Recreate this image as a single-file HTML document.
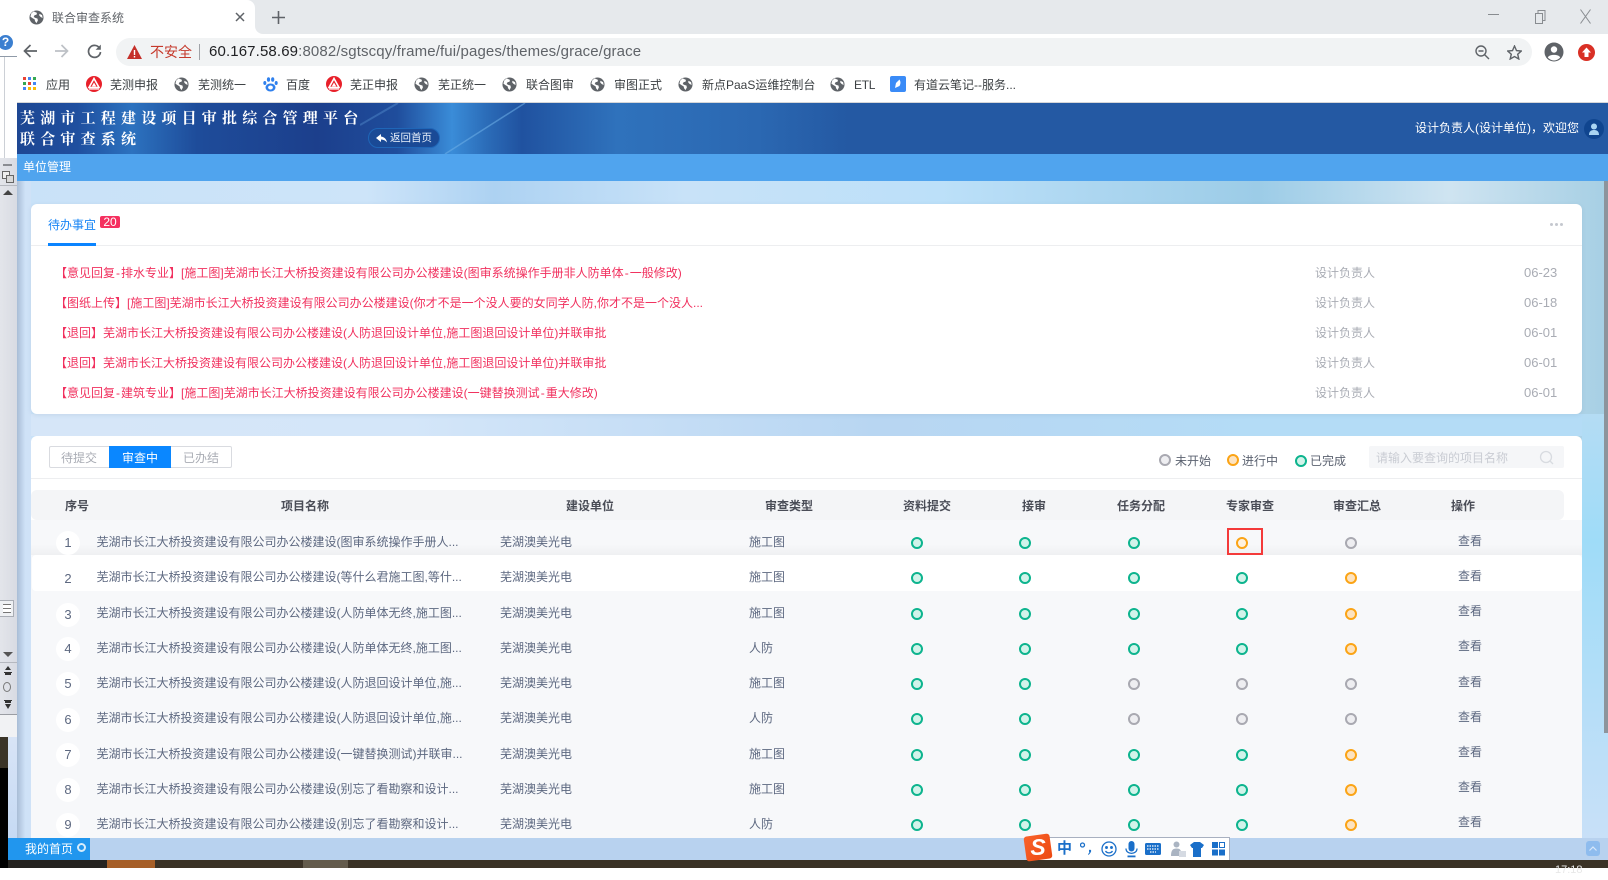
<!DOCTYPE html>
<html lang="zh"><head><meta charset="utf-8"><title>联合审查系统</title>
<style>
*{box-sizing:border-box}
html,body{margin:0;padding:0}
body{width:1608px;height:868px;position:relative;overflow:hidden;background:#fff;font-family:"Liberation Sans","Noto Sans CJK SC",sans-serif;font-size:12px}
.a{position:absolute}
.t{position:absolute;line-height:20px;height:20px;white-space:nowrap;font-size:12px}
.bm{color:#3c4043}
.r{color:#f1305e;left:55px}
.r i{font-style:normal;padding:0 1px}
.n{color:#a9acb4}
.d{color:#a9acb4;font-size:13px}
.h{color:#4a4d57;font-weight:bold;transform:translateX(-50%)}
.c{color:#5d6880}
.v{color:#5d6880;left:1458px}
.num{position:absolute;left:56px;width:24px;height:24px;border-radius:50%;background:#fff;color:#5d6880;font-size:13px;text-align:center;line-height:24px}
.s{position:absolute;width:12px;height:12px;border-radius:50%;border:2px solid;margin:-6px 0 0 -6px}
.g{border-color:#0db48e;background:#d2f3ea}
.o{border-color:#fba416;background:#fde3c0}
.y{border-color:#a9a9b1;background:#eeeef1}
</style></head><body>
<svg width="0" height="0" style="position:absolute"><defs>
<symbol id="gl" viewBox="0 0 16 16"><circle cx="8" cy="8" r="7.500" fill="#5f6368"/><path d="M5 1.500 8.500 3 8 5 6 5.500 5 7.500 7 8.500 9 9 9.500 11 8 14 6.500 12 6 10 3.500 8.500 1.500 7 2.500 3.500Z M11 4 14 5.500 14.500 8.500 12.500 7.500 11 6Z" fill="#fff"/></symbol>
<symbol id="rd" viewBox="0 0 16 16"><circle cx="8" cy="8" r="8" fill="#e8202a"/><path d="M8 2.500 13 11.500H3Z" fill="none" stroke="#fff" stroke-width="1.600"/><path d="M8 6.500 10.300 10.500H5.700Z" fill="#fff"/><path d="M3 13H13" stroke="#fff" stroke-width="1.200"/></symbol>
</defs></svg>

<!-- left app panel -->
<div class="a" style="left:0;top:0;width:17px;height:158px;background:#fff"></div>
<div class="a" style="left:0;top:56px;width:17px;height:1px;background:#8f9aa8"></div>
<div class="a" style="left:4px;top:57px;width:1px;height:101px;background:#ccd0d6"></div>
<div class="a" style="left:-2px;top:35px;width:15px;height:15px;border-radius:50%;background:#3b7fd0;color:#fff;font:bold 12px/15px 'Liberation Sans',sans-serif;text-align:center">?</div>
<div class="a" style="left:0;top:158px;width:17px;height:579px;background:linear-gradient(90deg,#e3e5ea,#d8dbe3)"></div>
<div class="a" style="left:3px;top:164px;width:9px;height:2px;background:#8a8d92"></div>
<svg class="a" style="left:1px;top:170px" width="14" height="14" fill="#eee" stroke="#666"><path d="M1.500 1.500H8.500V8.500H1.500Z"/><path d="M5.500 5.500H12.500V12.500H5.500Z" fill="#d8d8d8"/></svg>
<div class="a" style="left:0;top:185px;width:17px;height:1px;background:#b5b8bf"></div>
<div class="a" style="left:3px;top:190px;width:0;height:0;border:5px solid transparent;border-bottom:5px solid #444;border-top:0"></div>
<div class="a" style="left:0;top:600px;width:14px;height:17px;background:#eef0f3;border:1px solid #a9adb5;border-left:0"></div>
<div class="a" style="left:3px;top:604px;width:8px;height:9px;border-top:1px solid #777;border-bottom:1px solid #777;background:linear-gradient(#fff 45%,#777 45%,#777 55%,#fff 55%)"></div>
<div class="a" style="left:3px;top:652px;width:0;height:0;border:5px solid transparent;border-top:5px solid #555;border-bottom:0"></div>
<div class="a" style="left:0;top:662px;width:17px;height:1px;background:#b5b8bf"></div>
<svg class="a" style="left:4px;top:666px" width="8" height="9" fill="#333"><path d="M4 0 7 4H1ZM0 6H8V7H0Z"/><path d="M1 7H7V9H1Z"/></svg>
<div class="a" style="left:3px;top:682px;width:8px;height:10px;border:1px solid #777;border-radius:50%"></div>
<svg class="a" style="left:4px;top:700px" width="8" height="10" fill="#333"><path d="M0 0H8V1H0ZM1 1H7V3H1ZM4 9 7 4H1Z"/></svg>
<div class="a" style="left:0;top:714px;width:17px;height:1px;background:#9a9da3"></div>
<div class="a" style="left:0;top:715px;width:17px;height:22px;background:#f1f2f4"></div>

<!-- desktop strip -->
<div class="a" style="left:0;top:737px;width:8px;height:131px;background:#000"></div>
<div class="a" style="left:0;top:737px;width:8px;height:31px;background:#3a3428"></div>

<!-- main content background -->
<div class="a" style="left:8px;top:737px;width:23px;height:101px;background:linear-gradient(#d8e4f6,#c6daf4)"></div>
<div class="a" style="left:17px;top:181px;width:1591px;height:657px;background:linear-gradient(90deg,#c9e2f8 0,#cde4f9 22%,#add2f2 30%,#c8e2f8 42%,#bce0f9 58%,#9ccce7 78%,#cfe4f1 90%,#a6cfe4 100%)"></div>
<div class="a" style="left:1582px;top:414px;width:26px;height:424px;background:linear-gradient(#b4dcf4,#9fdcf8 30%,#c8e0f8 100%)"></div>
<div class="a" style="left:17px;top:414px;width:1565px;height:22px;background:linear-gradient(90deg,#d6e6f8 0,#d4e6f9 25%,#b8d6f2 55%,#b4dcf6 80%,#b4dcf6 100%)"></div>
<div class="a" style="left:17px;top:181px;width:14px;height:657px;background:linear-gradient(90deg,#a9bdd6,#cfe2f7 60%)"></div>
<div class="a" style="left:1604px;top:181px;width:4px;height:552px;background:#8d949c"></div>

<!-- chrome -->
<div class="a" style="left:17px;top:0;width:1591px;height:34px;background:#e6e9ec"></div>
<div class="a" style="left:17px;top:34px;width:1591px;height:68px;background:#fff"></div>
<div class="a" style="left:17px;top:102px;width:1591px;height:1px;background:#d5d6d8"></div>
<div class="a" style="left:17px;top:0;width:238px;height:34px;background:#fff;border-top-right-radius:8px"></div>
<div class="a" style="left:255px;top:26px;width:8px;height:8px;background:#fff"></div>
<div class="a" style="left:255px;top:26px;width:8px;height:8px;background:#e6e9ec;border-bottom-left-radius:8px"></div>
<svg class="a" style="left:29px;top:10px" width="15" height="15"><use href="#gl"/></svg>
<div class="t" style="left:52px;top:8px;color:#5f6368">联合审查系统</div>
<svg class="a" style="left:235px;top:12px" width="10" height="10"><path d="M1 1 9 9M9 1 1 9" stroke="#5f6368" stroke-width="1.500"/></svg>
<svg class="a" style="left:272px;top:11px" width="13" height="13"><path d="M6.500 0V13M0 6.500H13" stroke="#5f6368" stroke-width="1.600"/></svg>
<svg class="a" style="left:1488px;top:8px" width="104" height="16" fill="none" stroke="#888c90"><path d="M0 6.500H11"/><path d="M47.500 5.500H54.500V15.500H47.500ZM50 5.500V2.500H57V12.500H54.500"/><path d="M92.500 1.500 102.500 15.500M102.500 1.500 92.500 15.500"/></svg>

<svg class="a" style="left:23px;top:44px" width="14" height="14" fill="none" stroke="#5f6368" stroke-width="1.700"><path d="M14 7H1.500M7.500 1 1.500 7 7.500 13"/></svg>
<svg class="a" style="left:55px;top:44px" width="14" height="14" fill="none" stroke="#bdc1c6" stroke-width="1.700"><path d="M0 7H12.500M6.500 1 12.500 7 6.500 13"/></svg>
<svg class="a" style="left:87px;top:44px" width="15" height="15" fill="none" stroke="#5f6368" stroke-width="1.700"><path d="M12.800 4.500A6 6 0 1 0 13.500 8"/><path d="M13.800 0.600V5.800H8.600Z" fill="#5f6368" stroke="none"/></svg>

<div class="a" style="left:116px;top:38px;width:1416px;height:28px;background:#f1f3f4;border-radius:14px"></div>
<svg class="a" style="left:127px;top:45px" width="15" height="14"><path d="M7.500 0 15 14H0Z" fill="#c5302a"/><path d="M6.800 5H8.200V10H6.800ZM6.800 11H8.200V12.500H6.800Z" fill="#fff"/></svg>
<div class="t" style="left:150px;top:42px;color:#c5392b;font-size:14px">不安全</div>
<div class="a" style="left:199px;top:44px;width:1px;height:16px;background:#a0a3a8"></div>
<div class="t" style="left:209px;top:42px;font-size:15px;letter-spacing:.13px;color:#5f6368"><span style="color:#202124">60.167.58.69</span>:8082/sgtscqy/frame/fui/pages/themes/grace/grace</div>
<svg class="a" style="left:1475px;top:45px" width="15" height="15" fill="none" stroke="#5f6368" stroke-width="1.400"><circle cx="6" cy="6" r="5"/><path d="M9.700 9.700 14 14M3.500 6H8.500"/></svg>
<svg class="a" style="left:1507px;top:45px" width="15" height="15" fill="none" stroke="#5f6368" stroke-width="1.400"><path d="M7.500 1 9.500 5.600 14.300 6 10.700 9.200 11.800 14 7.500 11.500 3.200 14 4.300 9.200 0.700 6 5.500 5.600Z"/></svg>
<svg class="a" style="left:1544px;top:42px" width="20" height="20"><circle cx="10" cy="10" r="9.500" fill="#5f6368"/><circle cx="10" cy="7.500" r="3.200" fill="#fff"/><path d="M3.800 15.500C5 12 15 12 16.200 15.500A8 8 0 0 1 3.800 15.500Z" fill="#fff"/></svg>
<svg class="a" style="left:1578px;top:44px" width="17" height="17"><circle cx="8.500" cy="8.500" r="8.500" fill="#d93025"/><path d="M8.500 3.500 13 8.500H10.500V13H6.500V8.500H4Z" fill="#fff"/></svg>

<!-- bookmarks -->
<svg class="a" style="left:23px;top:77px" width="13" height="13"><g fill="#ea4335"><rect x="0" y="0" width="3" height="3"/><rect x="5" y="0" width="3" height="3" fill="#4285f4"/><rect x="10" y="0" width="3" height="3" fill="#34a853"/><rect x="0" y="5" width="3" height="3" fill="#34a853"/><rect x="5" y="5" width="3" height="3"/><rect x="10" y="5" width="3" height="3" fill="#4285f4"/><rect x="0" y="10" width="3" height="3" fill="#4285f4"/><rect x="5" y="10" width="3" height="3" fill="#fbbc05"/><rect x="10" y="10" width="3" height="3" fill="#fbbc05"/></g></svg>
<div class="t bm" style="left:46px;top:75px">应用</div>
<svg class="a" style="left:86px;top:76px" width="16" height="16"><use href="#rd"/></svg>
<div class="t bm" style="left:110px;top:75px">芜测申报</div>
<svg class="a" style="left:174px;top:77px" width="15" height="15"><use href="#gl"/></svg>
<div class="t bm" style="left:198px;top:75px">芜测统一</div>
<svg class="a" style="left:263px;top:77px" width="15" height="15" fill="#2f80ed"><ellipse cx="7.500" cy="10.500" rx="5" ry="4"/><ellipse cx="5.500" cy="2.500" rx="1.600" ry="2.300"/><ellipse cx="9.700" cy="2.500" rx="1.600" ry="2.300"/><ellipse cx="1.800" cy="6" rx="1.500" ry="2"/><ellipse cx="13.200" cy="6" rx="1.500" ry="2"/><ellipse cx="7.500" cy="10.500" rx="2.400" ry="2" fill="#fff"/></svg>
<div class="t bm" style="left:286px;top:75px">百度</div>
<svg class="a" style="left:326px;top:76px" width="16" height="16"><use href="#rd"/></svg>
<div class="t bm" style="left:350px;top:75px">芜正申报</div>
<svg class="a" style="left:414px;top:77px" width="15" height="15"><use href="#gl"/></svg>
<div class="t bm" style="left:438px;top:75px">芜正统一</div>
<svg class="a" style="left:502px;top:77px" width="15" height="15"><use href="#gl"/></svg>
<div class="t bm" style="left:526px;top:75px">联合图审</div>
<svg class="a" style="left:590px;top:77px" width="15" height="15"><use href="#gl"/></svg>
<div class="t bm" style="left:614px;top:75px">审图正式</div>
<svg class="a" style="left:678px;top:77px" width="15" height="15"><use href="#gl"/></svg>
<div class="t bm" style="left:702px;top:75px">新点PaaS运维控制台</div>
<svg class="a" style="left:830px;top:77px" width="15" height="15"><use href="#gl"/></svg>
<div class="t bm" style="left:854px;top:75px;letter-spacing:-.3px">ETL</div>
<svg class="a" style="left:890px;top:76px" width="16" height="16"><rect width="16" height="16" rx="2" fill="#3a8bf7"/><path d="M5 12 6 7 9.500 3.500C10.500 5.500 11 7 9.500 10Z" fill="#fff"/></svg>
<div class="t bm" style="left:914px;top:75px">有道云笔记--服务...</div>

<!-- header -->
<div class="a" style="left:17px;top:103px;width:1591px;height:51px;background:linear-gradient(90deg,#1e4793 0,#1f4f9f 60px,#2c72bf 115px,#1e4c9a 180px,#1c3f8c 300px,#1f4d9c 380px,#3a8cd8 435px,#2b6cb8 470px,#2052a0 505px,#2f72bc 600px,#2b68b2 740px,#2459a3 830px,#2459a3 100%)"></div>
<svg class="a" style="left:360px;top:103px" width="180" height="51" fill="none" stroke="#6fb0e8" stroke-opacity=".55"><path d="M165 0 85 51" stroke-width="1.500"/><path d="M0 22 38 0" stroke-width="2" stroke-opacity=".3"/></svg>
<div class="a" style="left:20px;top:107px;color:#fff;font:bold 15px/21px 'Noto Serif CJK SC','Liberation Serif',serif;letter-spacing:5.200px;white-space:nowrap">芜湖市工程建设项目审批综合管理平台<br>联合审查系统</div>
<div class="a" style="left:368px;top:128px;width:72px;height:20px;border-radius:10px;background:#1a4a96;border:1px solid #1f66b8"></div>
<svg class="a" style="left:376px;top:134px" width="11" height="9"><path d="M5 0 0 4 5 8V5.500C7.500 5.500 9.500 6.500 11 8.500 10.500 5 8 2.800 5 2.500Z" fill="#fff"/></svg>
<div class="t" style="left:390px;top:128px;color:#eaf2fb;font-size:10.500px">返回首页</div>
<div class="t" style="left:1415px;top:118px;color:#fff">设计负责人(设计单位)，欢迎您</div>
<svg class="a" style="left:1584px;top:119px" width="20" height="20"><circle cx="10" cy="10" r="10" fill="#10458f"/><circle cx="10" cy="7.500" r="3" fill="#a9d4f2"/><path d="M5 16C5 12 7.500 11 10 11S15 12 15 16Z" fill="#a9d4f2"/></svg>
<div class="a" style="left:17px;top:154px;width:1591px;height:27px;background:#50a4ee"></div>
<div class="t" style="left:23px;top:157px;color:#fff">单位管理</div>

<!-- card 1 -->
<div class="a" style="left:31px;top:204px;width:1551px;height:210px;background:#fff;border-radius:6px;box-shadow:0 1px 4px rgba(120,150,180,.2)"></div>
<div class="a" style="left:31px;top:245px;width:1551px;height:1px;background:#edeef0"></div>
<div class="a" style="left:48px;top:243px;width:48px;height:3px;background:#0a84ff"></div>
<div class="t" style="left:48px;top:215px;color:#1a86f5">待办事宜</div>
<div class="a" style="left:100px;top:216px;width:20px;height:12px;background:#f5305f;color:#fff;border-radius:2px;font-size:12px;line-height:12px;text-align:center">20</div>
<div class="a" style="left:1550px;top:223px;width:3px;height:3px;background:#c5c8cf;border-radius:50%"></div>
<div class="a" style="left:1555px;top:223px;width:3px;height:3px;background:#c5c8cf;border-radius:50%"></div>
<div class="a" style="left:1560px;top:223px;width:3px;height:3px;background:#c5c8cf;border-radius:50%"></div>

<div class="t r" style="top:263px">【意见回复<i>-</i>排水专业】[施工图]芜湖市长江大桥投资建设有限公司办公楼建设(图审系统操作手册非人防单体<i>-</i>一般修改)</div>
<div class="t r" style="top:293px">【图纸上传】[施工图]芜湖市长江大桥投资建设有限公司办公楼建设(你才不是一个没人要的女同学人防,你才不是一个没人...</div>
<div class="t r" style="top:323px">【退回】芜湖市长江大桥投资建设有限公司办公楼建设(人防退回设计单位,施工图退回设计单位)并联审批</div>
<div class="t r" style="top:353px">【退回】芜湖市长江大桥投资建设有限公司办公楼建设(人防退回设计单位,施工图退回设计单位)并联审批</div>
<div class="t r" style="top:383px">【意见回复<i>-</i>建筑专业】[施工图]芜湖市长江大桥投资建设有限公司办公楼建设(一键替换测试<i>-</i>重大修改)</div>
<div class="t n" style="left:1315px;top:263px">设计负责人</div>
<div class="t n" style="left:1315px;top:293px">设计负责人</div>
<div class="t n" style="left:1315px;top:323px">设计负责人</div>
<div class="t n" style="left:1315px;top:353px">设计负责人</div>
<div class="t n" style="left:1315px;top:383px">设计负责人</div>
<div class="t d" style="left:1524px;top:263px">06-23</div>
<div class="t d" style="left:1524px;top:293px">06-18</div>
<div class="t d" style="left:1524px;top:323px">06-01</div>
<div class="t d" style="left:1524px;top:353px">06-01</div>
<div class="t d" style="left:1524px;top:383px">06-01</div>

<!-- card 2 -->
<div class="a" style="left:31px;top:436px;width:1551px;height:402px;background:#fff;border-radius:6px 6px 0 0"></div>
<div class="a" style="left:49px;top:446px;width:183px;height:22px;border:1px solid #d9dbe0;border-radius:2px"></div>
<div class="a" style="left:109px;top:446px;width:62px;height:22px;background:#0a87ff"></div>
<div class="t" style="left:61px;top:448px;color:#a9acb4">待提交</div>
<div class="t" style="left:122px;top:448px;color:#fff">审查中</div>
<div class="t" style="left:183px;top:448px;color:#a9acb4">已办结</div>
<div class="a" style="left:31px;top:478px;width:1551px;height:1px;background:#edeef0"></div>
<div class="s y" style="left:1165px;top:460px"></div>
<div class="t" style="left:1175px;top:451px;color:#5b6270">未开始</div>
<div class="s o" style="left:1233px;top:460px"></div>
<div class="t" style="left:1242px;top:451px;color:#5b6270">进行中</div>
<div class="s g" style="left:1301px;top:461px"></div>
<div class="t" style="left:1310px;top:451px;color:#5b6270">已完成</div>
<div class="a" style="left:1369px;top:446px;width:195px;height:22px;background:#f5f6f8;border-radius:2px"></div>
<div class="t" style="left:1376px;top:448px;color:#c9ccd3">请输入要查询的项目名称</div>
<svg class="a" style="left:1539px;top:450px" width="15" height="15" fill="none" stroke="#d8dbe0" stroke-width="1.300"><circle cx="7" cy="7" r="5.500"/><path d="M11 11 14 14"/></svg>

<div class="a" style="left:31px;top:490px;width:1533px;height:30px;background:#f4f5f7;border-radius:6px"></div>
<div class="t h" style="left:77px;top:496px">序号</div>
<div class="t h" style="left:305px;top:496px">项目名称</div>
<div class="t h" style="left:590px;top:496px">建设单位</div>
<div class="t h" style="left:789px;top:496px">审查类型</div>
<div class="t h" style="left:927px;top:496px">资料提交</div>
<div class="t h" style="left:1034px;top:496px">接审</div>
<div class="t h" style="left:1141px;top:496px">任务分配</div>
<div class="t h" style="left:1250px;top:496px">专家审查</div>
<div class="t h" style="left:1357px;top:496px">审查汇总</div>
<div class="t h" style="left:1463px;top:496px">操作</div>

<div class="a" style="left:31px;top:520px;width:1551px;height:318px;background:#f7f8fa"></div>
<div class="a" style="left:31px;top:520px;width:1551px;height:35px;background:linear-gradient(#f7f8fa 70%,#eff0f2)"></div>
<div class="a" style="left:32px;top:555px;width:1550px;height:36px;background:#fff;border-radius:4px"></div>

<div class="num" style="top:531px">1</div><div class="num" style="top:567px">2</div><div class="num" style="top:603px">3</div><div class="num" style="top:637px">4</div><div class="num" style="top:672px">5</div><div class="num" style="top:708px">6</div><div class="num" style="top:743px">7</div><div class="num" style="top:778px">8</div><div class="num" style="top:813px">9</div>

<div class="t c" style="left:96.500px;top:532px">芜湖市长江大桥投资建设有限公司办公楼建设(图审系统操作手册人...</div>
<div class="t c" style="left:96.500px;top:567px">芜湖市长江大桥投资建设有限公司办公楼建设(等什么君施工图,等什...</div>
<div class="t c" style="left:96.500px;top:603px">芜湖市长江大桥投资建设有限公司办公楼建设(人防单体无终,施工图...</div>
<div class="t c" style="left:96.500px;top:638px">芜湖市长江大桥投资建设有限公司办公楼建设(人防单体无终,施工图...</div>
<div class="t c" style="left:96.500px;top:673px">芜湖市长江大桥投资建设有限公司办公楼建设(人防退回设计单位,施...</div>
<div class="t c" style="left:96.500px;top:708px">芜湖市长江大桥投资建设有限公司办公楼建设(人防退回设计单位,施...</div>
<div class="t c" style="left:96.500px;top:744px">芜湖市长江大桥投资建设有限公司办公楼建设(一键替换测试)并联审...</div>
<div class="t c" style="left:96.500px;top:779px">芜湖市长江大桥投资建设有限公司办公楼建设(别忘了看勘察和设计...</div>
<div class="t c" style="left:96.500px;top:814px">芜湖市长江大桥投资建设有限公司办公楼建设(别忘了看勘察和设计...</div>

<div class="t c" style="left:500px;top:532px">芜湖澳美光电</div><div class="t c" style="left:500px;top:567px">芜湖澳美光电</div><div class="t c" style="left:500px;top:603px">芜湖澳美光电</div><div class="t c" style="left:500px;top:638px">芜湖澳美光电</div><div class="t c" style="left:500px;top:673px">芜湖澳美光电</div><div class="t c" style="left:500px;top:708px">芜湖澳美光电</div><div class="t c" style="left:500px;top:744px">芜湖澳美光电</div><div class="t c" style="left:500px;top:779px">芜湖澳美光电</div><div class="t c" style="left:500px;top:814px">芜湖澳美光电</div>

<div class="t c" style="left:749px;top:532px">施工图</div><div class="t c" style="left:749px;top:567px">施工图</div><div class="t c" style="left:749px;top:603px">施工图</div><div class="t c" style="left:749px;top:638px">人防</div><div class="t c" style="left:749px;top:673px">施工图</div><div class="t c" style="left:749px;top:708px">人防</div><div class="t c" style="left:749px;top:744px">施工图</div><div class="t c" style="left:749px;top:779px">施工图</div><div class="t c" style="left:749px;top:814px">人防</div>

<div class="t v" style="top:531px">查看</div><div class="t v" style="top:566px">查看</div><div class="t v" style="top:601px">查看</div><div class="t v" style="top:636px">查看</div><div class="t v" style="top:672px">查看</div><div class="t v" style="top:707px">查看</div><div class="t v" style="top:742px">查看</div><div class="t v" style="top:777px">查看</div><div class="t v" style="top:812px">查看</div>

<div class="s g" style="left:917px;top:543px"></div><div class="s g" style="left:1025px;top:543px"></div><div class="s g" style="left:1134px;top:543px"></div><div class="s o" style="left:1242px;top:543px;background:#fff2df"></div><div class="s y" style="left:1351px;top:543px"></div>
<div class="s g" style="left:917px;top:578px"></div><div class="s g" style="left:1025px;top:578px"></div><div class="s g" style="left:1134px;top:578px"></div><div class="s g" style="left:1242px;top:578px"></div><div class="s o" style="left:1351px;top:578px"></div>
<div class="s g" style="left:917px;top:614px"></div><div class="s g" style="left:1025px;top:614px"></div><div class="s g" style="left:1134px;top:614px"></div><div class="s g" style="left:1242px;top:614px"></div><div class="s o" style="left:1351px;top:614px"></div>
<div class="s g" style="left:917px;top:649px"></div><div class="s g" style="left:1025px;top:649px"></div><div class="s g" style="left:1134px;top:649px"></div><div class="s g" style="left:1242px;top:649px"></div><div class="s o" style="left:1351px;top:649px"></div>
<div class="s g" style="left:917px;top:684px"></div><div class="s g" style="left:1025px;top:684px"></div><div class="s y" style="left:1134px;top:684px"></div><div class="s y" style="left:1242px;top:684px"></div><div class="s y" style="left:1351px;top:684px"></div>
<div class="s g" style="left:917px;top:719px"></div><div class="s g" style="left:1025px;top:719px"></div><div class="s y" style="left:1134px;top:719px"></div><div class="s y" style="left:1242px;top:719px"></div><div class="s y" style="left:1351px;top:719px"></div>
<div class="s g" style="left:917px;top:755px"></div><div class="s g" style="left:1025px;top:755px"></div><div class="s g" style="left:1134px;top:755px"></div><div class="s g" style="left:1242px;top:755px"></div><div class="s o" style="left:1351px;top:755px"></div>
<div class="s g" style="left:917px;top:790px"></div><div class="s g" style="left:1025px;top:790px"></div><div class="s g" style="left:1134px;top:790px"></div><div class="s g" style="left:1242px;top:790px"></div><div class="s o" style="left:1351px;top:790px"></div>
<div class="s g" style="left:917px;top:825px"></div><div class="s g" style="left:1025px;top:825px"></div><div class="s g" style="left:1134px;top:825px"></div><div class="s g" style="left:1242px;top:825px"></div><div class="s o" style="left:1351px;top:825px"></div>

<div class="a" style="left:1227px;top:528px;width:36px;height:27px;border:2.500px solid #f43a3a"></div>

<!-- bottom bar -->
<div class="a" style="left:8px;top:838px;width:1600px;height:22px;background:#b8d2ef"></div>
<div class="a" style="left:8px;top:838px;width:82px;height:22px;background:#2196ee"></div>
<div class="t" style="left:25px;top:839px;color:#fff">我的首页</div>
<div class="a" style="left:77px;top:843px;width:9px;height:9px;border:2px solid #d6ecfb;border-radius:50%"></div>
<div class="a" style="left:1586px;top:841px;width:14px;height:15px;background:#8ebcee;border-radius:3px"></div>
<svg class="a" style="left:1589px;top:846px" width="8" height="5" fill="none" stroke="#d8e8fa" stroke-width="1.200"><path d="M0.500 4.500 4 1 7.500 4.500"/></svg>

<!-- taskbar -->
<div class="a" style="left:8px;top:860px;width:1600px;height:8px;background:#3a3226"></div>
<div class="a" style="left:8px;top:860px;width:99px;height:8px;background:#252320"></div>
<div class="a" style="left:107px;top:860px;width:48px;height:8px;background:#a65f28"></div>
<div class="a" style="left:303px;top:860px;width:45px;height:8px;background:#635b4c"></div>
<div class="t" style="left:1555px;top:860px;color:#e8e8e8;font-size:11px">17:18</div>

<!-- sogou IME -->
<div class="a" style="left:1036px;top:837px;width:194px;height:23px;background:#fff;border:1px solid #a8b0c0;border-bottom:0"></div>
<div class="a" style="left:1025px;top:835px;width:26px;height:25px;background:linear-gradient(135deg,#f9622a,#ec4a12);border-radius:3px;transform:rotate(-8deg)"></div>
<div class="a" style="left:1025px;top:834px;width:26px;height:26px;color:#fff;font:italic bold 23px/26px 'Liberation Sans',sans-serif;text-align:center">S</div>
<div class="a" style="left:1057px;top:837px;color:#1a6fc9;font:bold 15px/23px 'Liberation Sans','Noto Sans CJK SC',sans-serif">中</div>
<svg class="a" style="left:1080px;top:842px" width="14" height="14" fill="#1a6fc9"><circle cx="2.500" cy="3" r="2" fill="none" stroke="#1a6fc9" stroke-width="1.300"/><path d="M9 8C12 7 12 10 8.500 13L8 12C9.500 11 9.500 10 9 9.500Z"/></svg>
<svg class="a" style="left:1101px;top:841px" width="16" height="16" fill="none" stroke="#1a6fc9" stroke-width="1.300"><circle cx="8" cy="8" r="7"/><circle cx="5.500" cy="6.500" r=".8" fill="#1a6fc9"/><circle cx="10.500" cy="6.500" r=".8" fill="#1a6fc9"/><path d="M4.500 10C6 12.500 10 12.500 11.500 10"/></svg>
<svg class="a" style="left:1125px;top:841px" width="13" height="17" fill="#1a6fc9"><rect x="3.500" y="0" width="6" height="10.500" rx="3"/><path d="M1 7.500C1 14 12 14 12 7.500" fill="none" stroke="#1a6fc9" stroke-width="1.300"/><rect x="2.500" y="14.500" width="8" height="1.800"/></svg>
<svg class="a" style="left:1145px;top:843px" width="16" height="13"><rect width="16" height="12" rx="1.500" fill="#1a6fc9"/><path d="M2 3H14M2 6H14M5 9H11" stroke="#fff" stroke-width="1.300" stroke-dasharray="1.500 1"/></svg>
<svg class="a" style="left:1170px;top:841px" width="16" height="17" fill="#aab4c2"><circle cx="6.500" cy="3.500" r="3"/><path d="M1 15C1 9 3 7.500 6.500 7.500S11 9 11 12V15Z"/><rect x="9" y="10" width="7" height="6" fill="#d5dae2"/></svg>
<svg class="a" style="left:1190px;top:842px" width="14" height="15" fill="#1a6fc9"><path d="M4 0H10L14 3 12 6H11V15H3V6H2L0 3Z"/></svg>
<svg class="a" style="left:1212px;top:842px" width="13" height="14" fill="#1a6fc9"><rect width="6" height="6"/><rect x="7.500" y="0.500" width="5" height="5" fill="none" stroke="#1a6fc9"/><rect y="7.500" width="6" height="6"/><rect x="7" y="7.500" width="6" height="6"/></svg>
</body></html>
